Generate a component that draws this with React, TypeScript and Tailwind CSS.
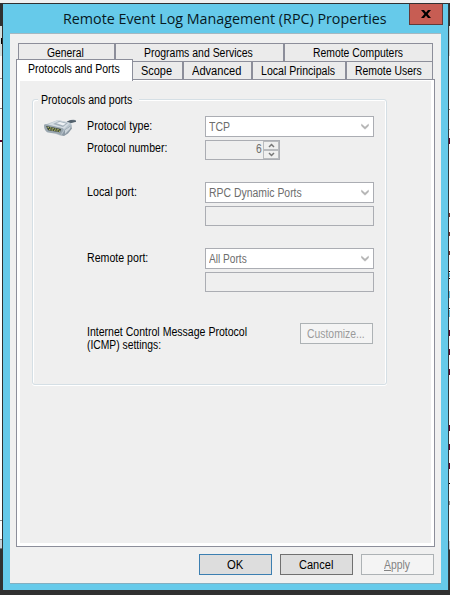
import { useLayoutEffect, useRef, useState } from 'react';

type FitProps = { w: number; className?: string; children: React.ReactNode };

function Fit({ w, className = '', children }: FitProps) {
  const ref = useRef<HTMLSpanElement>(null);
  const [scale, setScale] = useState(1);
  useLayoutEffect(() => {
    if (ref.current) setScale(w / ref.current.offsetWidth);
  }, [w]);
  return (
    <span className={`block shrink-0 whitespace-nowrap text-left ${className}`} style={{ width: w }}>
      <span ref={ref} className="inline-block origin-left" style={{ transform: `scaleX(${scale})` }}>
        {children}
      </span>
    </span>
  );
}

function Tab({ label, w, className }: { label: string; w: number; className: string }) {
  return (
    <div className={`flex h-[18px] justify-center border-r border-t border-l border-[#8c8e9a] bg-[#ebebeb] pr-[2px] leading-[18px] ${className}`}>
      <Fit w={w}>{label}</Fit>
    </div>
  );
}

function Combo({ label, w }: { label: string; w: number }) {
  return (
    <div className="flex h-[21px] w-[169px] items-center justify-between border border-[#abadb3] bg-white pl-[3px] pr-[4px] leading-[19px] text-[#6d6d6d]">
      <Fit w={w} className="pt-[2px]">{label}</Fit>
      <svg width="8" height="7" viewBox="0 0 8 7">
        <path d="M.5 1v2L4 6.3 7.5 3V1L4 4Z" fill="#b4b4b4" stroke="#b4b4b4" strokeWidth=".4" />
      </svg>
    </div>
  );
}

function Field() {
  return <div className="mt-[3px] h-5 w-[169px] border border-[#abadb3] bg-[#efefef]" />;
}

function Row({ label, w, className, children }: { label: string; w: number; className: string; children: React.ReactNode }) {
  return (
    <div className={`flex ${className}`}>
      <div className="w-[118px] leading-[20px]">
        <Fit w={w}>{label}</Fit>
      </div>
      <div>{children}</div>
    </div>
  );
}

function ConnectorIcon() {
  return (
    <svg width="33" height="18" viewBox="0 0 33 18">
      <path d="M20 5c3-3 7-5 11-4l1 2c-4 0-6 1-8 4Z" fill="#8594a0" />
      <path d="M23 2.5 27 1l5 .5v1.3l-6 1.4Z" fill="#53616c" />
      <path d="M0 6 14 1l13 3 1 3-7 8-5 1Z" fill="#b9c5ce" />
      <path d="M4 5.5 14 1l12 3-6 6Z" fill="#d5dde3" />
      <path d="m9 5 6-3 9 2-5 4Z" fill="#a5b2bd" />
      <path d="m12 4 4-1 6 1.5-3 2Z" fill="#edf1f4" />
      <path d="M0 6.5c0-1 1-1.5 2-1.3L18 9c2 .4 2 1.5 1 3l-2 3.5-13-2c-2-.5-4-3-4-7Z" fill="#9aa7b0" />
      <path d="m2 7 15 3-1 3.2-12-2Z" fill="#3a4438" />
      <path d="M3.5 8.3 16 11M5 10.4l11 2" stroke="#b3ba68" strokeWidth="1.1" strokeDasharray="1.5 1" />
      <path d="m18 15.5 3-5 6-4 1 3-4 5-4 2.5-8-1.5Z" fill="#8c99a4" />
      <path d="m21 11 6-4-1 3-5 5Z" fill="#cbd4da" />
    </svg>
  );
}

function DialogButton({ className, children }: { className: string; children: React.ReactNode }) {
  return <button className={`flex h-[21px] w-[73px] justify-center border pr-[2px] leading-[21px] ${className}`}>{children}</button>;
}

const rightMarks = [
  'mt-[31px] bg-[#888888] h-px',
  'mt-[19px] bg-[#bdbdbd] h-px',
  'mt-[8px] bg-[#590030] h-[6px]',
  'mt-[69px] bg-[#78352e] h-[4px]',
  'mt-[15px] bg-[#78352e] h-[4px]',
  'mt-[15px] bg-[#78352e] h-[4px]',
  'mt-[16px] bg-black h-px',
  'mt-[1px] bg-[#65c8e8] h-[4px]',
  'mt-px bg-black h-px',
  'mt-[12px] bg-[#65c8e8] h-[7px]',
  'mt-[10px] bg-black h-px',
  'mt-px bg-[#65c8e8] h-[7px]',
  'mt-[13px] bg-[#590030] h-[6px]',
  'mt-[13px] bg-[#590030] h-[6px]',
  'mt-[14px] bg-[#590030] h-[6px]',
  'mt-[50px] bg-[#590030] h-[6px]',
  'mt-[13px] bg-[#590030] h-[6px]',
  'mt-[13px] bg-[#590030] h-[6px]',
  'mt-[14px] bg-black h-px',
  'mt-[17px] bg-[#999999] h-[4px]',
];

export default function App() {
  return (
    <div className="flex h-[595px] w-[450px] flex-col overflow-hidden bg-[#303030] font-['Liberation_Sans',Arial,sans-serif] text-[12px] text-black">
      <div className="h-[3px] shrink-0 bg-[#f0f0f0]" />
      <div className="flex h-[587px]">
        <div className="w-[2px] shrink-0 overflow-hidden">
          <div className="mt-[23px] flex h-[30px] items-center bg-[#d2dfdf]"><div className="h-[6px] w-[2px] border-r border-black" /></div>
          <div className="h-[23px] border-b border-[#999999] bg-[#f7f7f7]" />
          <div className="h-[30px] border-b border-[#888888] bg-white" />
          <div className="h-[411px] bg-white pt-[31px]"><div className="h-[2px] bg-[#590030]" /></div>
          <div className="h-[20px] border-y border-[#888888] bg-white" />
          <div className="h-[9px] border-b border-[#777777] bg-[#c4d0da]" />
        </div>
        <div className="ml-px mt-px flex w-[445px] shrink-0 flex-col bg-[#66caea]">
          <div className="flex h-[29px] justify-between">
            <Fit w={324} className="ml-[60px] font-['Open_Sans','Noto_Sans',sans-serif] text-[15px] leading-[29px] text-[#07191f]">
              Remote Event Log Management (RPC) Properties
            </Fit>
            <button className="mr-[5px] flex h-[21px] w-[34px] items-center justify-center border-x border-b border-[#633a38] bg-[#c75d53]">
              <svg width="10" height="8" viewBox="0 0 10 8"><path d="M0 0h3l2 2.5L7 0h3L6.6 4 10 8H7L5 5.5 3 8H0l3.4-4Z" fill="black" /></svg>
            </button>
          </div>
          <div className="ml-[7px] h-[551px] w-[431px] border-b border-t border-b-[#82afc1] border-t-[#a5b8c1] bg-[#f0f0f0] px-[6px]">
            <div className="mt-[9px] flex px-[2px]">
              <Tab label="General" w={37} className="w-[97px]" />
              <Tab label="Programs and Services" w={109} className="w-[169px]" />
              <Tab label="Remote Computers" w={90} className="w-[149px]" />
            </div>
            <div className="flex h-[18px] pr-[2px]">
              <div className="relative z-10 -mt-[2px] flex h-[22px] w-[117px] justify-center border-x border-t border-[#8c8e9a] bg-white pr-[2px] leading-[19px]">
                <Fit w={92}>Protocols and Ports</Fit>
              </div>
              <Tab label="Scope" w={31} className="w-[50px] border-l-0" />
              <Tab label="Advanced" w={49} className="w-[69px]" />
              <Tab label="Local Principals" w={74} className="w-[94px]" />
              <Tab label="Remote Users" w={67} className="w-[87px]" />
            </div>
            <div className="h-[468px] w-[419px] border border-[#8c8e9a] bg-white pb-[3px] pl-[3px] pr-[3px] pt-px">
              <div className="h-[462px] bg-[#efefef] pl-[12px] pt-[18px]">
                <div className="h-[286px] w-[355px] rounded-[3px] border border-[#d5dfe5] shadow-[inset_1px_1px_0_white,inset_-1px_0_0_white,0_1px_0_white]">
                  <div className="-mt-[9px] ml-[5px] h-[18px] w-[101px] bg-[#efefef] pl-[3px] leading-[18px]">
                    <Fit w={91}>Protocols and ports</Fit>
                  </div>
                  <div className="mt-[7px] flex pl-[11px]">
                    <div className="w-[43px] pt-[3px]"><ConnectorIcon /></div>
                    <div>
                      <Row label="Protocol type:" w={65} className="h-[22px]">
                        <Combo label="TCP" w={21} />
                      </Row>
                      <Row label="Protocol number:" w={80} className="mb-[22px] h-[22px]">
                        <div className="mt-[2px] flex h-5 w-[75px] justify-end border border-[#abadb3] leading-[17px] text-[#6d6d6d]">
                          <Fit w={6} className="mr-px">6</Fit>
                          <div className="w-4">
                            {['M1 4 3.5 1.5 6 4', 'M1 1 3.5 3.5 6 1'].map((d) => (
                              <div key={d} className="flex h-[9px] items-center justify-center border border-[#b9bbbe]">
                                <svg width="7" height="5" viewBox="0 0 7 5"><path d={d} fill="none" stroke="#777777" strokeWidth="1.5" /></svg>
                              </div>
                            ))}
                          </div>
                        </div>
                      </Row>
                      <Row label="Local port:" w={50} className="h-[66px]"><Combo label="RPC Dynamic Ports" w={93} /><Field /></Row>
                      <Row label="Remote port:" w={61} className="h-[66px]"><Combo label="All Ports" w={38} /><Field /></Row>
                      <div className="mt-[9px] flex">
                        <div className="w-[213px] pt-[2px] leading-[14px]">
                          <Fit w={160}>Internet Control Message Protocol</Fit>
                          <Fit w={74} className="-mt-px">(ICMP) settings:</Fit>
                        </div>
                        <DialogButton className="border-[#adb2b5] bg-[#f4f4f4] text-[#9a9a9a]"><Fit w={58}>Customize...</Fit></DialogButton>
                      </div>
                    </div>
                  </div>
                </div>
              </div>
            </div>
            <div className="mt-[7px] flex justify-end gap-2 pr-px">
              <DialogButton className="border-[#3c7fb1] bg-[#dddddd]"><Fit w={16}>OK</Fit></DialogButton>
              <DialogButton className="border-[#707070] bg-[#dddddd]"><Fit w={34}>Cancel</Fit></DialogButton>
              <DialogButton className="border-[#adb2b5] bg-[#f4f4f4] text-[#838383]"><Fit w={26}><u>A</u>pply</Fit></DialogButton>
            </div>
          </div>
        </div>
        <div className="w-[1px] shrink-0 bg-[#303b40]" />
        <div className="w-[1px] shrink-0 overflow-hidden pt-[23px]">
          <div className="h-[30px] bg-[#d2dfdf]" />
          <div className="h-[485px] overflow-hidden bg-white pt-[22px]">
            {rightMarks.map((mark, i) => <div key={i} className={mark} />)}
          </div>
          <div className="h-[9px] border-b border-[#777777] bg-[#c4d0da]" />
        </div>
      </div>
    </div>
  );
}
